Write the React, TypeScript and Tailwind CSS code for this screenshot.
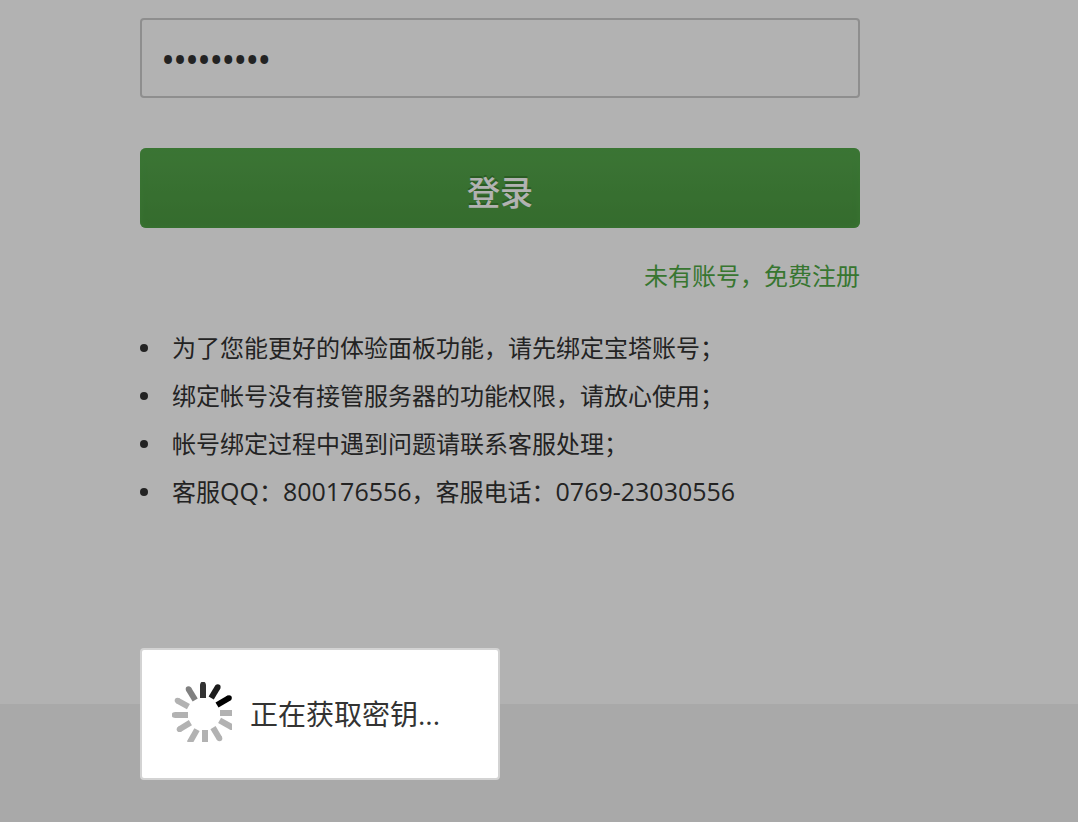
import * as React from "react";

const tips = [
  "为了您能更好的体验面板功能，请先绑定宝塔账号；",
  "绑定帐号没有接管服务器的功能权限，请放心使用；",
  "帐号绑定过程中遇到问题请联系客服处理；",
];

// [inner x, inner y, outer x, outer y, color], clockwise from twelve o'clock
const spokes: [number, number, number, number, string][] = [
  [31, 16, 31, 2.5, "#333333"],
  [39.2, 16, 45.8, 5, "#1c1c1c"],
  [45, 23, 57, 16, "#000000"],
  [48, 31, 62, 31, "#b2b2b2"],
  [47.6, 38.3, 60, 45.3, "#b2b2b2"],
  [41, 45.6, 47.5, 56.5, "#b2b2b2"],
  [33, 48, 33, 62, "#b2b2b2"],
  [25, 47.6, 18, 60, "#b2b2b2"],
  [18.4, 40.6, 7.5, 47.2, "#b2b2b2"],
  [16, 33, 2.5, 33, "#b2b2b2"],
  [16.4, 24.7, 5.5, 18.6, "#b2b2b2"],
  [23.2, 18, 16.5, 7, "#808080"],
];

function Spinner() {
  return (
    <svg viewBox="0 0 60 60" className="size-[60px] shrink-0" aria-hidden="true">
      {spokes.map(([x1, y1, x2, y2, color]) => (
        <g key={`${x1}-${y1}`}>
          <line x1={x1} y1={y1} x2={x2} y2={y2} stroke={color} strokeWidth="6" />
          <circle cx={x2} cy={y2} r="2.8" fill={color} />
        </g>
      ))}
    </svg>
  );
}

function LoadingDialog() {
  return (
    <div className="fixed inset-0 bg-black/30">
      <div
        role="status"
        className="absolute left-[140px] top-[648px] flex items-start gap-[18px] rounded border-2 border-[#d3d3d3] bg-white py-8 pl-[30px] pr-[58px]"
      >
        <Spinner />
        <span className="text-[28px] leading-[64px]">正在获取密钥...</span>
      </div>
    </div>
  );
}

function LoginForm() {
  return (
    <form
      className="flex w-full max-w-[720px] flex-col"
      onSubmit={(e) => e.preventDefault()}
    >
      <input
        type="password"
        aria-label="密码"
        defaultValue="123456789"
        className="h-20 w-full rounded border-2 border-[#cccccc] bg-white px-5 text-[32px] font-semibold outline-none"
      />
      <button
        type="submit"
        className="mt-[50px] h-20 w-full rounded-md bg-linear-to-b from-[#55a84c] to-[#4c9a41] pt-2.5 text-[33px] font-medium leading-[48px] text-white shadow-[inset_0_0_6px_#53a84a] [text-shadow:0_-2px_0_#3d8533]"
      >
        登录
      </button>
      <a
        href="#register"
        className="mt-6 self-end text-2xl leading-[48px] text-[#50aa45]"
      >
        未有账号，免费注册
      </a>
    </form>
  );
}

function Tip({ children }: { children: React.ReactNode }) {
  return (
    <li className="flex items-center gap-6">
      <span className="size-2 shrink-0 rounded-full bg-[#333333]" />
      <span>{children}</span>
    </li>
  );
}

function Latin({ children }: { children: React.ReactNode }) {
  return <span className="text-[25px] leading-none">{children}</span>;
}

export default function App() {
  return (
    <div className="flex min-h-screen flex-col bg-[#f2f2f2] font-['Open_Sans','Noto_Sans_CJK_SC',sans-serif] text-[#333333]">
      <main className="bg-white px-[140px] pb-[188px] pt-[18px]">
        <LoginForm />
        <ul className="mt-6 text-2xl leading-[48px]">
          {tips.map((tip) => (
            <Tip key={tip}>{tip}</Tip>
          ))}
          <Tip>
            客服<Latin>QQ</Latin>：<Latin>800176556</Latin>，客服电话：
            <Latin>0769-23030556</Latin>
          </Tip>
        </ul>
      </main>
      <LoadingDialog />
    </div>
  );
}
